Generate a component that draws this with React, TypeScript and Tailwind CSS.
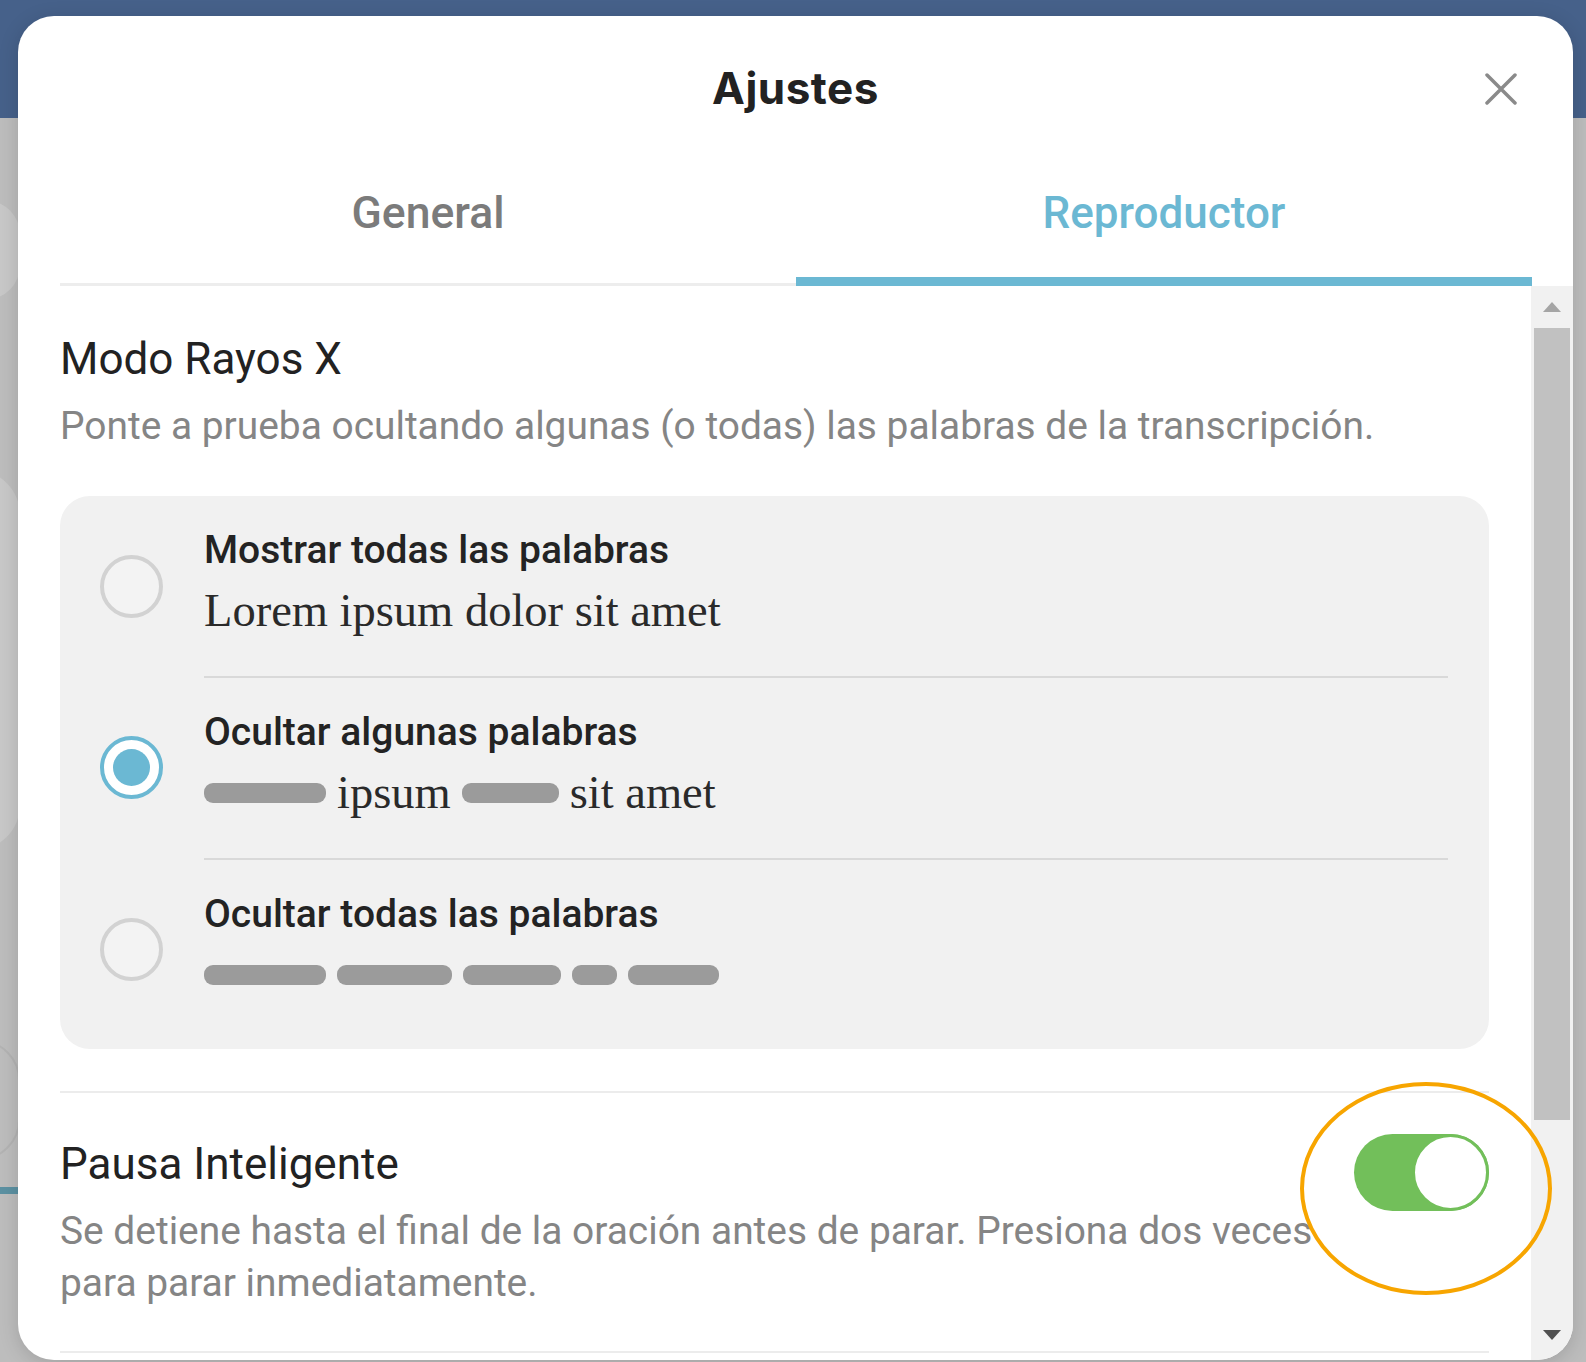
import React from "react";

const sans = { fontFamily: "Roboto, 'Noto Sans', sans-serif" } as React.CSSProperties;

function Radio({ checked }: { checked?: boolean }) {
  if (checked) {
    return (
      <div className="w-[63px] h-[63px] shrink-0 rounded-full border-[4px] border-[#6bb8d3] bg-white flex items-center justify-center">
        <div className="w-[37px] h-[37px] rounded-full bg-[#6bb8d3]" />
      </div>
    );
  }
  return <div className="w-[63px] h-[63px] shrink-0 rounded-full border-[4px] border-[#d2d2d2] bg-[#f3f3f3]" />;
}

function Bar({ w }: { w: number }) {
  return <span className="inline-block h-[20px] rounded-[9px] bg-[#9b9b9b]" style={{ width: w }} />;
}

function Option({
  title,
  checked,
  first,
  children,
}: {
  title: string;
  checked?: boolean;
  first?: boolean;
  children: React.ReactNode;
}) {
  return (
    <div className="flex items-center">
      <div className="w-[144px] shrink-0 flex items-center pl-[40px]">
        <Radio checked={checked} />
      </div>
      <div className={`flex-1 pt-[29px] pb-[34px] ${first ? "" : "border-t-2 border-[#d9d9d9]"}`}>
        <div className="text-[39px] leading-[50px] font-medium text-[#232323]" style={sans}>
          {title}
        </div>
        <div
          className="mt-[5px] h-[62px] flex items-center gap-[11px] text-[46.5px] text-[#2a2a2a]"
          style={{ fontFamily: "'Liberation Serif', 'DejaVu Serif', serif" }}
        >
          {children}
        </div>
      </div>
    </div>
  );
}

export default function App() {
  return (
    <div className="relative w-[1586px] h-[1362px] overflow-hidden bg-[#bdbdbd]" style={sans}>
      <div className="h-[118px] bg-[#46618a]" />
      {/* dimmed background page shapes */}
      <div className="absolute left-[-50px] top-[200px] w-[70px] h-[100px] rounded-full bg-[#c8c8c8]" />
      <div className="absolute left-[-70px] top-[470px] w-[90px] h-[380px] rounded-[60px] bg-[#c8c8c8]" />
      <div className="absolute left-[-60px] top-[1040px] w-[80px] h-[120px] rounded-full border-2 border-[#b3b3b3]" />
      <div className="absolute left-0 top-[1187px] w-[20px] h-[7px] bg-[#5c91a2]" />

      {/* modal */}
      <div className="absolute left-[18px] top-[16px] w-[1555px] h-[1344px] rounded-[36px] bg-white overflow-hidden flex flex-col shadow-[0_4px_20px_rgba(0,0,0,0.15)]">
        {/* header */}
        <div className="relative h-[144px] shrink-0 flex items-center justify-center">
          <div
            className="text-[44px] leading-[52px] font-bold tracking-[0.5px] text-[#222222]"
            style={{ fontFamily: "Inter, 'Open Sans', sans-serif" }}
          >
            Ajustes
          </div>
          <button className="absolute right-[56px] top-[57px] w-[32px] h-[32px]">
            <svg viewBox="0 0 32 32" width="32" height="32">
              <path d="M2 2 L30 30 M30 2 L2 30" stroke="#8a8a8a" strokeWidth="3.5" strokeLinecap="round" />
            </svg>
          </button>
        </div>

        {/* tabs */}
        <div className="ml-[42px] mr-[41px] h-[126px] shrink-0 flex">
          <div className="relative flex-1 flex justify-center pt-[27px]">
            <span className="text-[44.5px] leading-[52px] font-medium text-[#7b7b7b]">General</span>
            <div className="absolute left-0 right-0 bottom-0 h-[3px] bg-[#ededed]" />
          </div>
          <div className="relative flex-1 flex justify-center pt-[27px]">
            <span className="text-[44px] leading-[52px] font-medium text-[#6bb8d3]">Reproductor</span>
            <div className="absolute left-0 right-0 bottom-0 h-[9px] bg-[#6bb8d3]" />
          </div>
        </div>

        {/* body */}
        <div className="flex-1 flex min-h-0">
          <div className="flex-1 overflow-hidden px-[42px]">
            {/* Modo Rayos X */}
            <div className="pt-[47px]">
              <div className="text-[44px] leading-[52px] text-[#222222]">Modo Rayos X</div>
              <div className="mt-[18px] text-[38.9px] leading-[46px] text-[#858585]">
                Ponte a prueba ocultando algunas (o todas) las palabras de la transcripción.
              </div>
              <div className="mt-[47px] rounded-[30px] bg-[#f1f1f1] pr-[41px] pb-[9px]">
                <Option title="Mostrar todas las palabras" first>
                  <span>Lorem ipsum dolor sit amet</span>
                </Option>
                <Option title="Ocultar algunas palabras" checked>
                  <Bar w={122} />
                  <span>ipsum</span>
                  <Bar w={97} />
                  <span>sit amet</span>
                </Option>
                <Option title="Ocultar todas las palabras">
                  <Bar w={122} />
                  <Bar w={115} />
                  <Bar w={98} />
                  <Bar w={45} />
                  <Bar w={91} />
                </Option>
              </div>
            </div>

            {/* Pausa Inteligente */}
            <div className="mt-[42px] border-t-2 border-[#ececec] pt-[41px] pb-[42px] flex items-start gap-[30px]">
              <div className="flex-1 pt-[4px]">
                <div className="text-[44px] leading-[52px] text-[#222222]">Pausa Inteligente</div>
                <div className="mt-[15px] text-[38.9px] leading-[52px] text-[#858585]">
                  Se detiene hasta el final de la oración antes de parar. Presiona dos veces para parar inmediatamente.
                </div>
              </div>
              <div className="relative w-[135px] h-[77px] shrink-0 rounded-full bg-[#72bf5a]">
                <div className="absolute right-0 top-0 w-[77px] h-[77px] rounded-full bg-white border-[3px] border-[#72bf5a]" />
              </div>
            </div>
            <div className="border-t-2 border-[#ececec]" />
          </div>

          {/* scrollbar */}
          <div className="w-[42px] shrink-0 bg-[#f1f1f1] flex flex-col items-center">
            <div className="h-[42px] flex items-center justify-center">
              <svg width="18" height="10" viewBox="0 0 18 10">
                <path d="M9 0 L18 10 L0 10 Z" fill="#a5a5a5" />
              </svg>
            </div>
            <div className="w-[36px] h-[792px] bg-[#c1c1c1]" />
            <div className="flex-1" />
            <div className="h-[40px] flex items-start justify-center pt-[10px]">
              <svg width="18" height="10" viewBox="0 0 18 10">
                <path d="M0 0 L18 0 L9 10 Z" fill="#505050" />
              </svg>
            </div>
          </div>
        </div>

        {/* annotation ellipse */}
        <div className="absolute left-[1282px] top-[1066px] w-[252px] h-[213px] rounded-[50%] border-[4px] border-[#f7a500]" />
      </div>
    </div>
  );
}
